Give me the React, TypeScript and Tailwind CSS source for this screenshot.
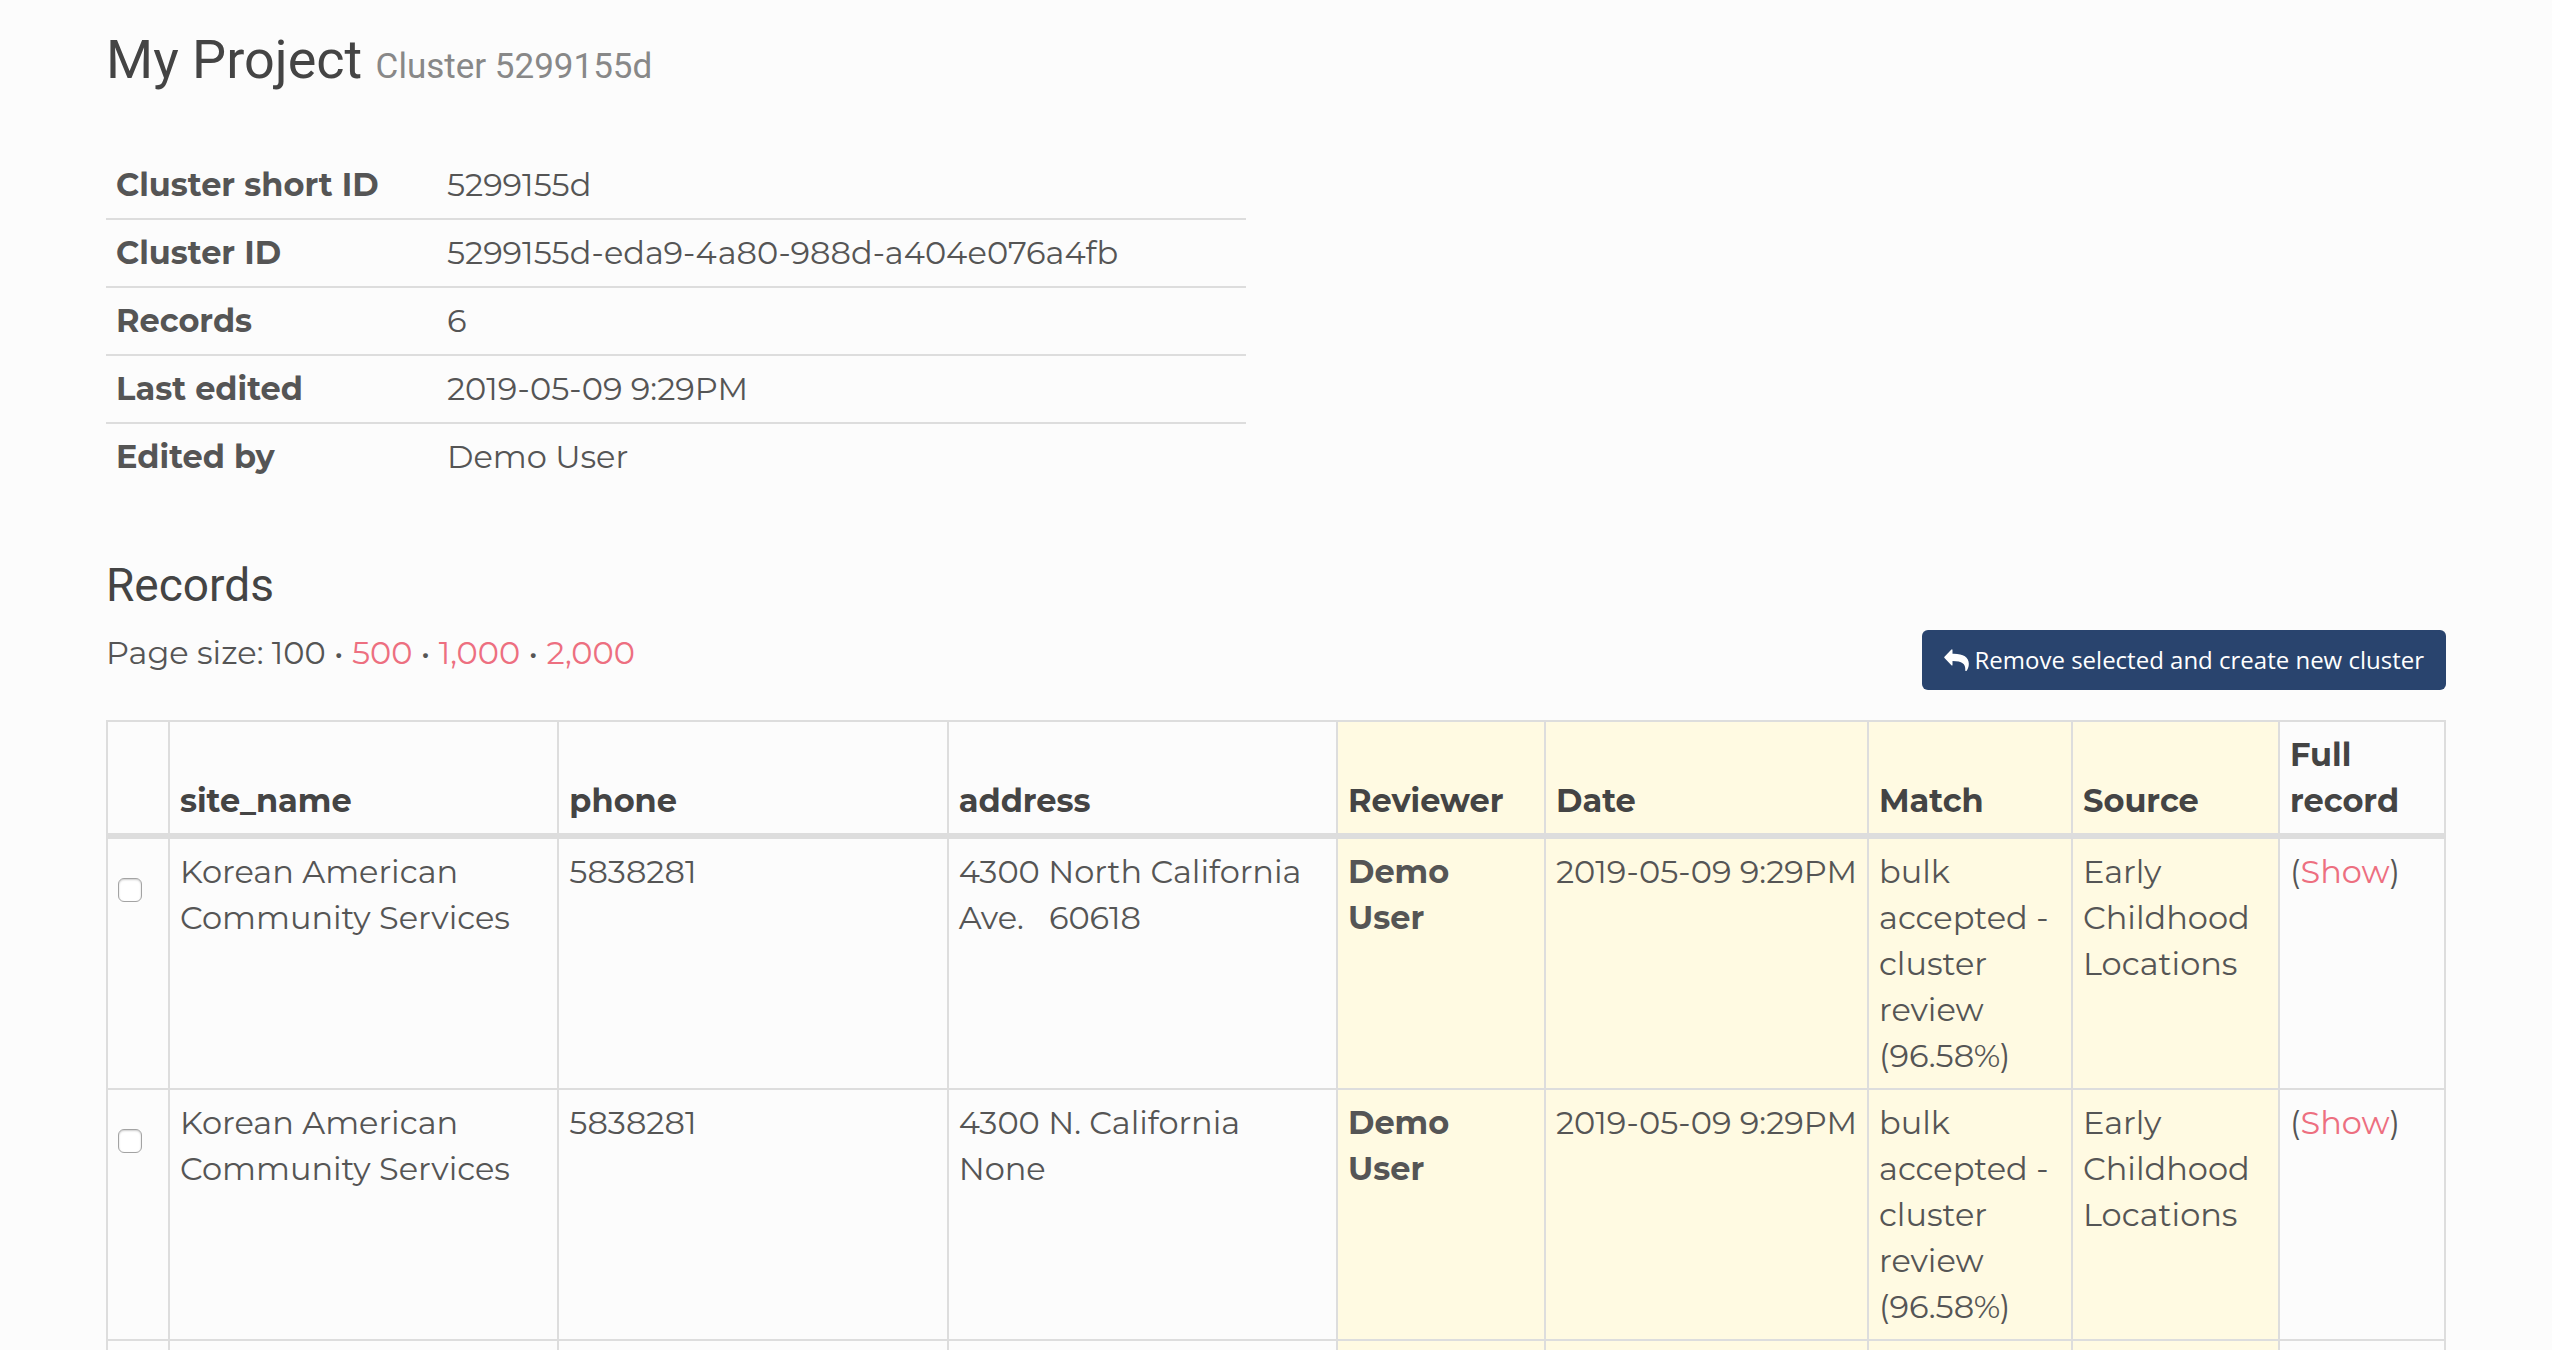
import { useState } from "react";

const details = [
  { label: "Cluster short ID", value: "5299155d" },
  { label: "Cluster ID", value: "5299155d-eda9-4a80-988d-a404e076a4fb" },
  { label: "Records", value: "6" },
  { label: "Last edited", value: "2019-05-09 9:29PM" },
  { label: "Edited by", value: "Demo User" },
];

const pageSizes = ["500", "1,000", "2,000"];

const columns = [
  { name: "", col: "w-[62px]" },
  { name: "site_name", col: "" },
  { name: "phone", col: "" },
  { name: "address", col: "" },
  { name: "Reviewer", col: "w-[208px] bg-[#fffae2]" },
  { name: "Date", col: "w-[323px] bg-[#fffae2]" },
  { name: "Match", col: "w-[204px] bg-[#fffae2]" },
  { name: "Source", col: "w-[207px] bg-[#fffae2]" },
  { name: "Full record", col: "w-[166px]" },
];

const record = {
  siteName: "Korean American Community Services",
  phone: "5838281",
  reviewer: "Demo User",
  date: "2019-05-09 9:29PM",
  match: "bulk accepted - cluster review (96.58%)",
  source: "Early Childhood Locations",
};

const records = [
  { ...record, id: 1, address: "4300 North California Ave.\u00a0\u00a0 60618" },
  { ...record, id: 2, address: "4300 N. California None" },
];

const th = "border-2 border-b-[6px] border-[#ddd] px-[10px] pt-[10px] pb-[9px] text-left align-bottom font-bold text-[#444]";
const td = "border-2 border-[#ddd] px-[10px] pt-[10px] pb-[9px] align-top";

const ReplyIcon = () => (
  <svg viewBox="0 0 74 66" className="h-[22px] w-[25px]" fill="currentColor" aria-hidden="true">
    <path d="M1 27 Q-1 25 1 23 L21 2 Q25 -1 25 4 V14 C56 13 74 24 74 44 C74 53 71 60 67 66 L63 65 C65 48 58 36 25 36 V47 Q25 52 21 48 Z" />
  </svg>
);

const App = () => {
  const [selected, setSelected] = useState<number[]>([]);

  const toggle = (id: number) =>
    setSelected((s) => (s.includes(id) ? s.filter((x) => x !== id) : [...s, id]));

  return (
    <div className="h-screen overflow-hidden bg-[#fcfcfc] px-[106px] font-['Montserrat',Inter,sans-serif] text-[32px] leading-[46px] text-[#555]">
      <h1 className="pt-[30px] font-[Roboto,sans-serif] text-[54px] leading-[60px] text-[#444]">
        My Project <small className="text-[35px] leading-none text-[#888]">Cluster 5299155d</small>
      </h1>

      <table className="mt-[62px] w-1/2 max-w-[1140px] border-collapse">
        <tbody>
          {details.map((d) => (
            <tr key={d.label} className="border-b-2 border-[#ddd] last:border-b-0">
              <th scope="row" className="w-[331px] p-[10px] text-left font-bold">{d.label}</th>
              <td className="p-[10px]">{d.value}</td>
            </tr>
          ))}
        </tbody>
      </table>

      <h2 className="mt-[70px] font-[Roboto,sans-serif] text-[46px] leading-[50px] text-[#444]">Records</h2>

      <div className="mt-[20px] flex justify-between">
        <p>
          Page size: 100
          {pageSizes.map((n) => (
            <span key={n}> • <a href="#" className="text-[#ed6f80]">{n}</a></span>
          ))}
        </p>
        <button className="flex h-[60px] items-center gap-[6px] rounded-[6px] bg-[#29446e] px-[22px] font-['Open_Sans',sans-serif] text-[24px] text-white">
          <ReplyIcon /> Remove selected and create new cluster
        </button>
      </div>

      <table className="mt-[30px] w-full table-fixed border-collapse">
        <colgroup>
          {columns.map((c) => (
            <col key={c.name} className={c.col} />
          ))}
        </colgroup>
        <thead>
          <tr>
            {columns.map((c) => (
              <th key={c.name} className={th}>{c.name}</th>
            ))}
          </tr>
        </thead>
        <tbody>
          {records.map((r) => (
            <tr key={r.id}>
              <td className={td}>
                <input
                  type="checkbox"
                  aria-label={`Select record ${r.id}`}
                  checked={selected.includes(r.id)}
                  onChange={() => toggle(r.id)}
                  className="mt-[29px] block size-[24px] appearance-none rounded-[6px] border border-[#a3a3a3] bg-white shadow-[inset_0_1px_2px_#ccc] checked:bg-[#29446e]"
                />
              </td>
              <td className={td}>{r.siteName}</td>
              <td className={td}>{r.phone}</td>
              <td className={td}>{r.address}</td>
              <td className={`${td} font-bold`}>{r.reviewer}</td>
              <td className={`${td} whitespace-nowrap`}>{r.date}</td>
              <td className={td}>{r.match}</td>
              <td className={td}>{r.source}</td>
              <td className={td}>(<a href="#" className="text-[#ed6f80]">Show</a>)</td>
            </tr>
          ))}
          <tr>
            {columns.map((c) => (
              <td key={c.name} className={td}></td>
            ))}
          </tr>
        </tbody>
      </table>
    </div>
  );
};

export default App;
